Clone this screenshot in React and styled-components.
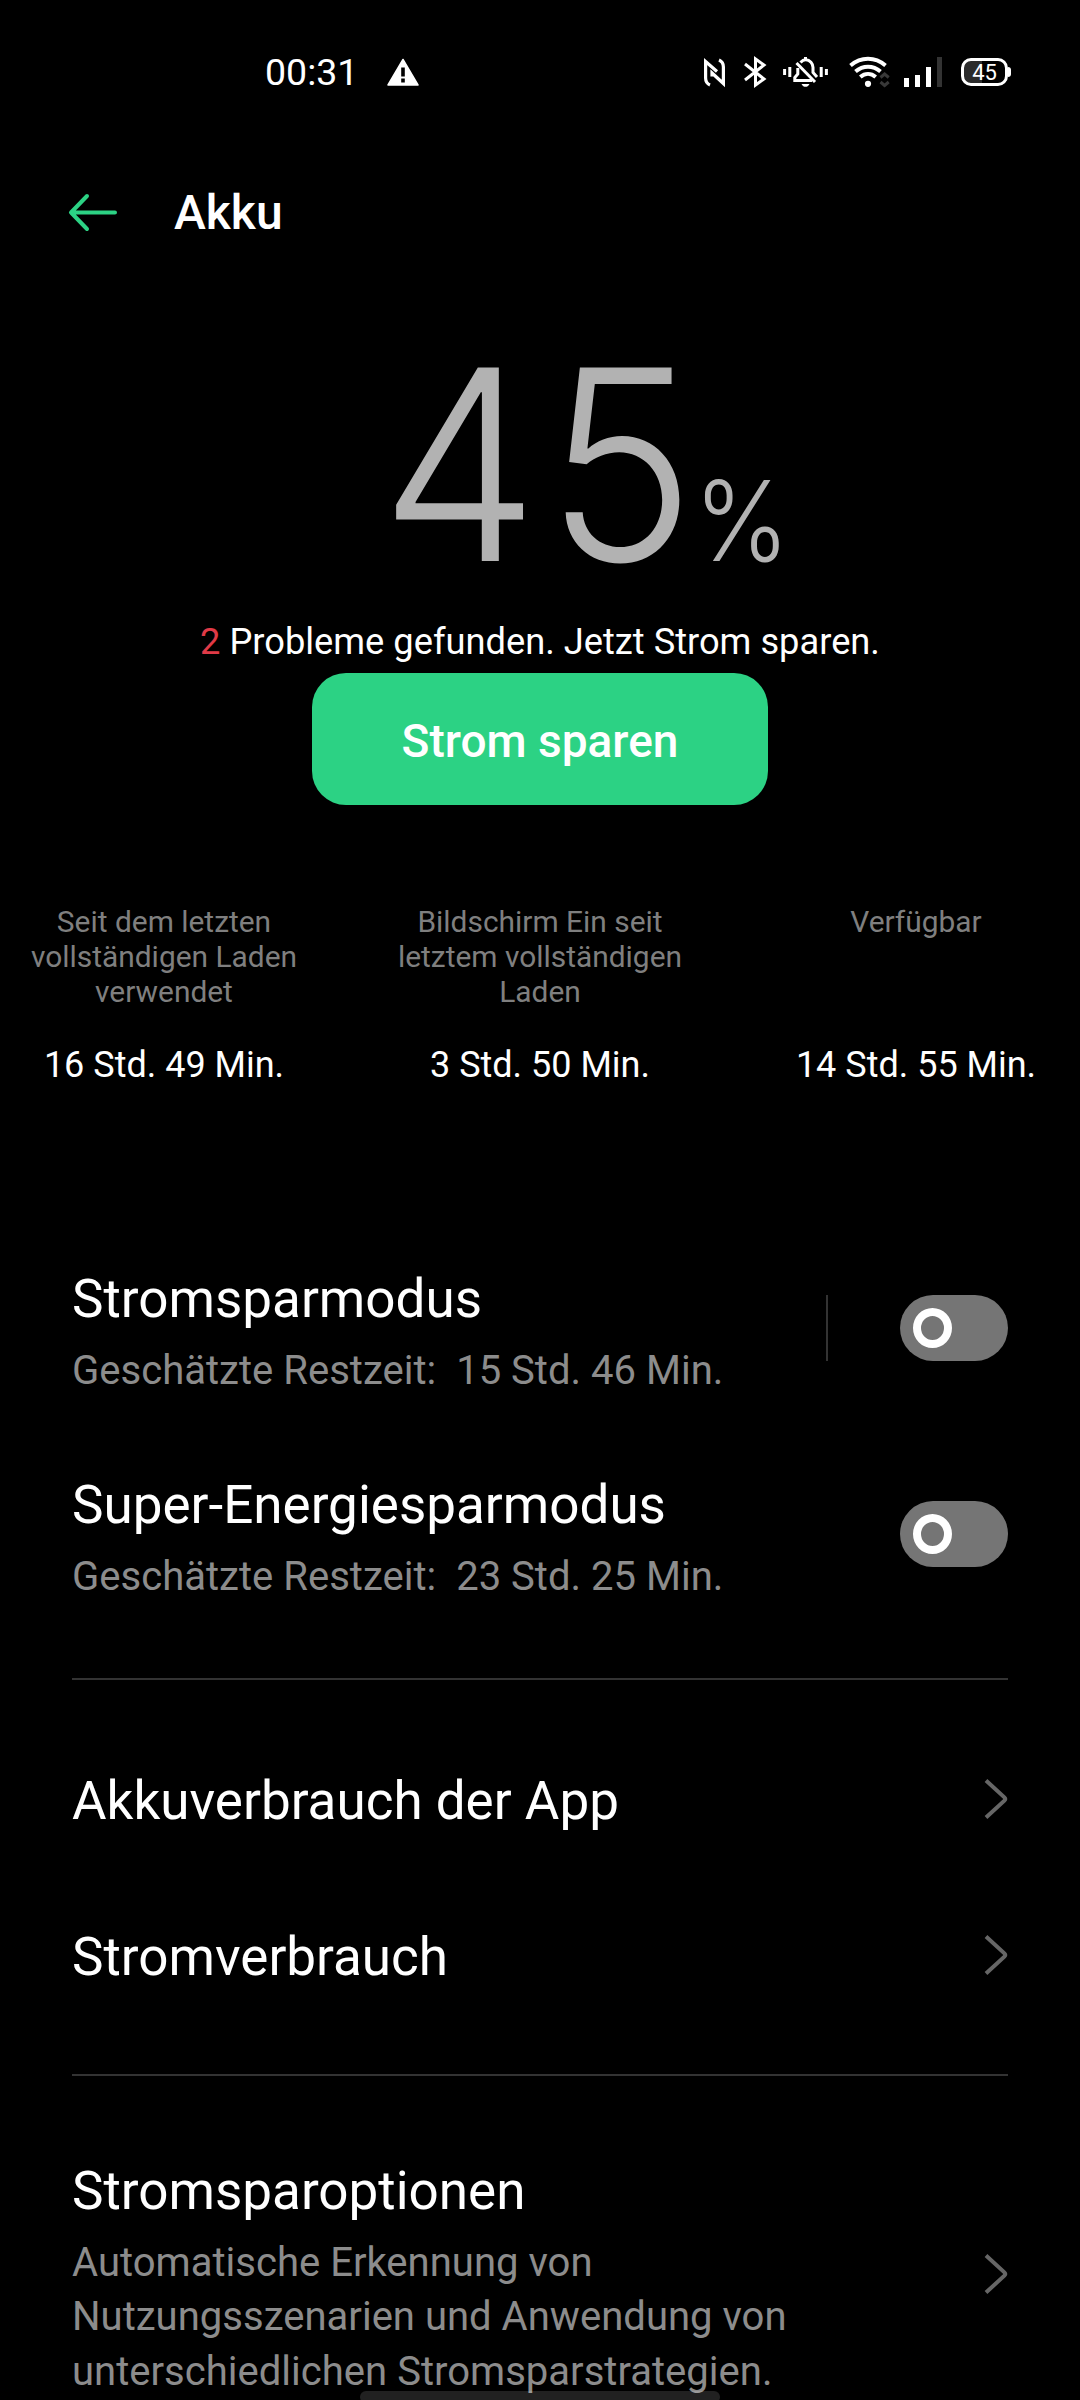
import React, { useState } from 'react';
import styled, { createGlobalStyle } from 'styled-components';

const green = '#2cd284';
const lineColor = '#333';

const GlobalStyle = createGlobalStyle`
    * {
        box-sizing: border-box;
    }

    body {
        margin: 0;
        background: #000;
    }
`;

const Screen = styled.div`
    position: relative;
    width: 1080px;
    height: 2400px;
    overflow: hidden;
    background: #000;
    color: #fff;
    font-family: Roboto, "Noto Sans", sans-serif;
`;

const StatusBar = styled.div`
    display: flex;
    align-items: center;
    height: 144px;
    padding: 0 72px 0 265px;
`;

const Clock = styled.div`
    width: 122px;
    font-size: 37.5px;
    line-height: 44px;
`;

const StatusIcons = styled.div`
    display: flex;
    align-items: center;
    margin-left: auto;
`;

const Icon = styled.svg`
    display: block;
    flex: none;
    width: ${props => props.w}px;
    height: ${props => props.h}px;
    margin-left: ${props => props.gap || 0}px;
    fill: none;
    stroke: #fff;
    overflow: visible;
`;

const BatteryBadge = styled.div`
    position: relative;
    width: 47px;
    height: 28px;
    margin-left: 19px;
    border: 3px solid #fff;
    border-radius: 10px;
    background: linear-gradient(to right, #2b2b2b 45%, #000 45%);
    font-size: 22px;
    line-height: 23px;
    text-align: center;

    &::after {
        content: '';
        position: absolute;
        top: 6px;
        right: -6px;
        width: 3px;
        height: 10px;
        border-radius: 0 3px 3px 0;
        background: #fff;
    }
`;

const Header = styled.header`
    display: flex;
    align-items: center;
    height: 137px;
    padding-left: 69px;
`;

const BackButton = styled.button`
    display: block;
    width: 105px;
    padding: 0 0 1px;
    border: 0;
    background: none;
`;

const PageTitle = styled.h1`
    margin: 0;
    font-size: 48px;
    font-weight: 500;
    line-height: 56px;
`;

const Level = styled.div`
    display: flex;
    align-items: baseline;
    height: 335px;
    padding: 48px 0 0 380px;
    color: #b2b2b2;
    font-family: Inter, Roboto, sans-serif;
    font-weight: 300;
    line-height: 270px;
`;

const LevelNumber = styled.span`
    width: 314px;
    font-size: 266px;
    letter-spacing: 7px;
    transform: scaleX(.95);
    transform-origin: left;
`;

const LevelUnit = styled.span`
    font-size: 111px;
    transform: scaleX(.92);
    transform-origin: left;
`;

const Summary = styled.p`
    margin: 0;
    height: 57px;
    padding-top: 5px;
    font-size: 36.25px;
    line-height: 42px;
    text-align: center;
`;

const ProblemCount = styled.span`
    color: #e03a47;
`;

const SaveButton = styled.button`
    display: block;
    width: 456px;
    height: 132px;
    margin: 0 auto;
    padding: 4px 0 0;
    border: 0;
    border-radius: 34px;
    background: ${green};
    color: #fff;
    font-family: inherit;
    font-size: 46px;
    font-weight: 500;
    line-height: 54px;
`;

const Stats = styled.div`
    display: flex;
    justify-content: space-between;
    height: 420px;
    padding: 99px 14px 0;
`;

const Stat = styled.div`
    width: 300px;
    text-align: center;
`;

const StatLabel = styled.div`
    height: 140px;
    color: #7f7f7f;
    font-size: 29.9px;
    line-height: 35px;
    white-space: pre-line;
`;

const StatValue = styled.div`
    font-size: 36px;
    line-height: 42px;
    white-space: nowrap;
`;

const Row = styled.div`
    display: flex;
    align-items: center;
    height: ${props => props.h}px;
    padding: 0 72px;
`;

const RowText = styled.div`
    flex: 1;
    padding-top: ${props => props.shift}px;
`;

const RowTitle = styled.div`
    font-size: 53px;
    line-height: 64px;
`;

const RowHint = styled.div`
    padding-top: 13px;
    color: #8c8c8c;
    font-size: 40.05px;
    line-height: 54.5px;
    white-space: pre-line;
`;

const Separator = styled.div`
    height: 2px;
    margin: 41px 72px;
    background: ${lineColor};
`;

const SwitchDivider = styled.div`
    width: 2px;
    height: 66px;
    margin-right: 72px;
    background: ${lineColor};
`;

const Switch = styled.button`
    display: flex;
    align-items: center;
    justify-content: ${props => (props.$on ? 'flex-end' : 'flex-start')};
    width: 108px;
    height: 66px;
    padding: 0 13px;
    border: 0;
    border-radius: 33px;
    background: ${props => (props.$on ? green : '#757575')};
`;

const Knob = styled.span`
    width: 39px;
    height: 40px;
    border: 8px solid #fff;
    border-radius: 50%;
`;

const HomeBar = styled.div`
    position: absolute;
    left: 360px;
    bottom: -3px;
    width: 360px;
    height: 12px;
    border-radius: 6px;
    background: rgba(255, 255, 255, .13);
`;

const stats = [
    { label: 'Seit dem letzten\nvollständigen Laden\nverwendet', value: '16 Std. 49 Min.' },
    { label: 'Bildschirm Ein seit\nletztem vollständigen\nLaden', value: '3 Std. 50 Min.' },
    { label: 'Verfügbar', value: '14 Std. 55 Min.' },
];

const optionsHint = 'Automatische Erkennung von\nNutzungsszenarien und Anwendung von\nunterschiedlichen Stromsparstrategien.';

function Status() {
    return (
        <StatusBar>
            <Clock>00:31</Clock>
            <Icon w={32} h={28} viewBox="0 0 32 28">
                <path d="M16 1.5 L31 27 H1 Z" fill="#fff" strokeWidth="1.5" strokeLinejoin="round" />
                <path d="M16 9.5 V18.5 M16 20.5 V24.5" stroke="#000" strokeWidth="3.6" />
            </Icon>
            <StatusIcons>
                {/* nfc */}
                <Icon w={21} h={27} viewBox="0 0 21 27" strokeWidth="3.2">
                    <path d="M6 26 C2.5 24.5 1.6 22 1.6 19 V2.5 L13 12.5" />
                    <path d="M15 1 C18.5 2.5 19.4 5 19.4 8 V24.5 L8 14 V17.5" />
                </Icon>
                {/* bluetooth */}
                <Icon w={22} h={30} gap={19} viewBox="0 0 22 30" strokeWidth="3">
                    <path d="M1 7 L20 22 L11.5 28 V2 L20 8 L1 23" />
                </Icon>
                {/* muted bell */}
                <Icon w={45} h={30} gap={17} viewBox="0 0 45 30" strokeWidth="3">
                    <path d="M1.6 12 V18 M6.8 10 V20 M38.2 10 V20 M43.4 12 V18" />
                    <path d="M17.5 5.5 C19.5 3.3 21 2.8 22.7 2.8 C27 2.8 30 6.5 30 10.5 V15.5 L34 20" />
                    <path d="M14.8 11 V17 L11.8 20.5 V23.5 H29" />
                    <path d="M13.5 6 L32 25" />
                    <path d="M22.5 0 V3" />
                    <path d="M18.5 27 H26.5 C25.5 29 24 29.8 22.5 29.8 C21 29.8 19.5 29 18.5 27 Z" fill="#fff" stroke="none" />
                </Icon>
                {/* wifi */}
                <Icon w={40} h={30} gap={21} viewBox="0 0 40 30" strokeWidth="4">
                    <path d="M1.5 8.5 C12 -.5 26 -.5 36.5 8.5" />
                    <path d="M6.5 14.5 C14 8 24 8 31.5 14.5" />
                    <path d="M11.3 20 C16 16 22 16 26.7 20" />
                    <circle cx="19" cy="26.8" r="3.1" fill="#fff" stroke="none" />
                    <path d="M31.5 20.5 L35.6 17 L39.7 20.5 M31.5 25 L35.6 28.5 L39.7 25" stroke="#383838" strokeWidth="3" />
                </Icon>
                {/* signal strength */}
                <Icon w={38} h={30} gap={15} viewBox="0 0 38 30" strokeWidth="5" strokeLinecap="butt">
                    <path d="M2.5 21 V30 M13.5 18 V30 M24.5 10 V30" />
                    <path d="M35.5 0 V30" stroke="#333" />
                </Icon>
                <BatteryBadge>45</BatteryBadge>
            </StatusIcons>
        </StatusBar>
    );
}

function Chevron() {
    return (
        <Icon w={24} h={40} viewBox="0 0 24 40">
            <path d="M2 1.5 L20.4 18.4 Q22 20 20.4 21.6 L2 38.5" stroke="#666" strokeWidth="4" />
        </Icon>
    );
}

function Toggle() {
    const [on, setOn] = useState(false);

    return (
        <Switch $on={on} onClick={() => setOn(!on)}>
            <Knob />
        </Switch>
    );
}

export default function App() {
    return (
        <Screen>
            <GlobalStyle />
            <Status />
            <Header>
                <BackButton aria-label="Zurück">
                    <Icon w={48} h={37} viewBox="0 0 48 37">
                        <path
                            d="M18 2 L2 18.5 L18 35 M2 18.5 H46"
                            stroke={green}
                            strokeWidth="4"
                            strokeLinecap="round"
                            strokeLinejoin="round"
                        />
                    </Icon>
                </BackButton>
                <PageTitle>Akku</PageTitle>
            </Header>
            <Level>
                <LevelNumber>45</LevelNumber>
                <LevelUnit>%</LevelUnit>
            </Level>
            <Summary>
                <ProblemCount>2</ProblemCount> Probleme gefunden. Jetzt Strom sparen.
            </Summary>
            <SaveButton>Strom sparen</SaveButton>
            <Stats>
                {stats.map(item => (
                    <Stat key={item.value}>
                        <StatLabel>{item.label}</StatLabel>
                        <StatValue>{item.value}</StatValue>
                    </Stat>
                ))}
            </Stats>
            <Row h={206}>
                <RowText shift={10}>
                    <RowTitle>Stromsparmodus</RowTitle>
                    <RowHint>Geschätzte Restzeit:{'\u00a0 '}15 Std. 46 Min.</RowHint>
                </RowText>
                <SwitchDivider />
                <Toggle />
            </Row>
            <Row h={206}>
                <RowText shift={10}>
                    <RowTitle>Super-Energiesparmodus</RowTitle>
                    <RowHint>Geschätzte Restzeit:{'\u00a0 '}23 Std. 25 Min.</RowHint>
                </RowText>
                <Toggle />
            </Row>
            <Separator />
            <Row h={156}>
                <RowText shift={3}>
                    <RowTitle>Akkuverbrauch der App</RowTitle>
                </RowText>
                <Chevron />
            </Row>
            <Row h={156}>
                <RowText shift={3}>
                    <RowTitle>Stromverbrauch</RowTitle>
                </RowText>
                <Chevron />
            </Row>
            <Separator />
            <Row h={314}>
                <RowText shift={10}>
                    <RowTitle>Stromsparoptionen</RowTitle>
                    <RowHint>{optionsHint}</RowHint>
                </RowText>
                <Chevron />
            </Row>
            <HomeBar />
        </Screen>
    );
}
